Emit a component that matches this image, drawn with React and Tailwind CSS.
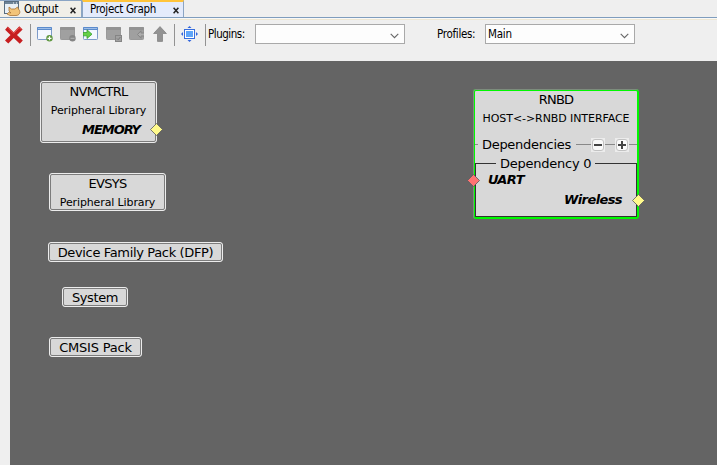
import React from 'react';

const ui = "font-['DejaVu_Sans_Condensed','DejaVu_Sans',sans-serif] [font-stretch:condensed]";
const graph = "font-['DejaVu_Sans',sans-serif] [font-stretch:normal]";

function WindowIcon({ disabled, children }) {
  return (
    <svg width="18" height="16" viewBox="0 0 18 16" className="shrink-0">
      <rect x="0.5" y="1.5" width="14" height="12" rx="0.8" fill={disabled ? '#a0a0a0' : '#f3f7ff'} stroke={disabled ? '#999' : '#7d9bc9'} />
      <rect x="0" y="1" width="15" height="3" rx="0.8" fill={disabled ? '#929292' : '#5b8bcc'} />
      {!disabled && <path d="M1 2.5h13" stroke="#9dbde8" />}
      {children}
    </svg>
  );
}

function Combo({ children }) {
  return (
    <div className="flex h-5 w-[150px] items-center justify-between border border-[#a9a9a9] bg-[#fdfdfd] pl-[2px] pr-[5px]">
      <span className="mt-[2px] text-[11.5px] leading-none tracking-[-0.2px]">{children}</span>
      <svg width="9" height="6" viewBox="0 0 9 6" className="mt-[3px]">
        <path d="M0.7 0.8 4.5 4.6 8.3 0.8" fill="none" stroke="#666" strokeWidth="1.1" />
      </svg>
    </div>
  );
}

function Close() {
  return (
    <svg width="6" height="7" viewBox="0 0 6 7" className="mt-[2px] shrink-0">
      <path d="M0.6 0.8 5.4 6.2M5.4 0.8 0.6 6.2" stroke="#222" strokeWidth="1.5" />
    </svg>
  );
}

function Node({ className, children }) {
  return (
    <div className={`absolute rounded-[3px] border border-[#ececec] bg-[#d8d8d8] ${className}`}>
      <div className="flex h-full flex-col items-center rounded-[2px] border border-[#7c7c7c] whitespace-nowrap">{children}</div>
    </div>
  );
}

function Pin({ color, className }) {
  return (
    <svg width="13" height="13" viewBox="0 0 13 13" className={`absolute ${className}`}>
      <path d="M6.5 0.5 12.5 6.5 6.5 12.5 0.5 6.5Z" fill={color} stroke="#5c5c5c" strokeWidth="0.8" />
    </svg>
  );
}

function Toggle({ plus }) {
  return (
    <svg width="14" height="14" viewBox="0 0 14 14" className="shrink-0">
      <rect width="14" height="14" fill="#ececec" />
      <rect x="1.5" y="1.5" width="11" height="11" rx="2.5" fill="#fafafa" stroke="#c2c2c2" />
      <path d={plus ? 'M3 7h8M7 3v8' : 'M3 7h8'} stroke="#444" strokeWidth="2" />
    </svg>
  );
}

export default function App() {
  return (
    <div className={`flex h-[465px] w-[717px] flex-col overflow-hidden bg-[#efefef] text-black ${ui}`}>
      <div className="flex h-[18px] shrink-0 border-b border-[#7f9dbd]">
        <div className="flex w-[82px] items-center border-r border-t border-[#8ba5c4] bg-[#f1efe8] pl-[4px]">
          <svg width="17" height="16" viewBox="0 0 17 16" className="shrink-0">
            <rect x="0.5" y="0.5" width="14" height="12" fill="#e9f0f6" stroke="#596d80" />
            <path d="M1 2h13" stroke="#6e8498" strokeWidth="2" />
            <path d="M9 2h1M12 2h1" stroke="#fff" />
            <path d="M5 6 7.5 8H11L13.5 6 14.8 8.5C17 11 15.5 14.5 12 14.5H6L3 13 4.5 11.5 7 12 5 10Z" fill="#f2c479" stroke="#a97335" strokeWidth="0.8" />
          </svg>
          <span className="ml-[3px] mt-px w-[46px] text-[11.5px] leading-none tracking-[-0.3px]">Output</span>
          <Close />
        </div>
        <div className="flex w-[102px] items-center border-x border-t-2 border-[#8ba5c4] border-t-[#ffc43b] bg-[#e4ebfb] pl-[7px]">
          <span className="w-[83px] text-[11.5px] leading-none tracking-[-0.34px]">Project Graph</span>
          <Close />
        </div>
      </div>
      <div className="h-[2px] shrink-0 border-b border-[#eee7d2] bg-[#f8f8f8]" />

      <div className="flex h-[41px] shrink-0 items-start pl-[4px] pt-1">
        <svg width="20" height="20" viewBox="0 0 20 20" className="mt-[1px]">
          <path d="M3.8 1.5 9.7 7.2 15.3 1.3 18.6 4.5 13 10.1 18.8 15.6 15.8 18.7 9.7 13 4.3 18.6 1 15.5 6.5 10 1.1 4.8Z" fill="#c71e20" />
          <path d="M4 2.5 9.7 8.3 15.3 2.6 17 4.4" fill="none" stroke="#e65a56" />
        </svg>
        <div className="ml-[6px] h-[22px] w-px bg-[#929292]" />
        <div className="ml-[6px] mt-[2px] flex gap-[5px]">
          <WindowIcon>
            <circle cx="12.5" cy="12.3" r="3.2" fill="#5d963e" />
            <path d="M10.5 12.3h4M12.5 10.3v4" stroke="#fff" strokeWidth="1.2" />
          </WindowIcon>
          <WindowIcon disabled>
            <circle cx="12.5" cy="12.3" r="3.2" fill="#858585" />
            <path d="M10.5 12.3h4" stroke="#b5b5b5" />
          </WindowIcon>
          <WindowIcon>
            <path d="M0 6.5h4V3.8L9 8.2 4 12.5V9.8H0Z" fill="#65cf46" stroke="#369f31" strokeWidth="0.8" />
          </WindowIcon>
          <WindowIcon disabled>
            <rect x="9.5" y="9.5" width="6" height="6" fill="#a1a1a1" stroke="#858585" />
            <path d="m11 12.5 1.2 1.2 2.2-2.7" fill="none" stroke="#777" />
          </WindowIcon>
          <WindowIcon disabled>
            <path d="M15 7h-3V4.8L8.5 8.5 12 12.2V10h3" fill="#acacac" stroke="#858585" />
          </WindowIcon>
        </div>
        <svg width="14" height="16" viewBox="0 0 14 16" className="ml-[6px] mt-[2px]">
          <path d="M7 0.6 13.4 7.5H9.5V15.4H4.5V7.5H0.6Z" fill="#929292" stroke="#858585" strokeWidth="0.8" />
        </svg>
        <div className="ml-[7px] h-[22px] w-px bg-[#929292]" />
        <svg width="17" height="16" viewBox="0 0 17 16" className="ml-[6px] mt-[2px]">
          <rect x="3.5" y="3.5" width="10" height="9" fill="#fff" stroke="#376ddd" />
          <rect x="5" y="5" width="7" height="6" fill="#5fa5f8" />
          <path d="m6.5 2 2-2 2 2M6.5 14l2 2 2-2M2 6 0 8l2 2M15 6l2 2-2 2" fill="#2f64dc" />
        </svg>
        <div className="ml-[7px] h-[22px] w-px bg-[#929292]" />
        <span className="ml-[2px] mt-[4px] w-[47px] text-[11.5px] leading-[13px] tracking-[-0.48px]">Plugins:</span>
        <Combo />
        <span className="ml-[32px] mt-[4px] w-[48px] text-[11.5px] leading-[13px] tracking-[-0.3px]">Profiles:</span>
        <Combo>Main</Combo>
      </div>

      <div className={`relative ml-[10px] flex-1 bg-[#646464] ${graph}`}>
        <Node className="left-[30px] top-[20px] h-[62px] w-[117px]">
          <div className="text-[13px] leading-[17px] tracking-[-0.75px]">NVMCTRL</div>
          <div className="mt-[3px] text-[11px] leading-[16px] tracking-[-0.12px]">Peripheral Library</div>
          <div className="mt-[3px] mr-[15px] self-end text-[13px] font-bold italic leading-[16px] tracking-[-1px]">MEMORY</div>
          <Pin color="#fffa8c" className="-right-[7px] top-[41px]" />
        </Node>
        <Node className="left-[39px] top-[112px] h-[38px] w-[117px]">
          <div className="mt-px text-[13px] leading-[16px] tracking-[-0.7px]">EVSYS</div>
          <div className="mt-[3px] text-[11px] leading-[16px] tracking-[-0.12px]">Peripheral Library</div>
        </Node>
        <Node className="left-[38px] top-[181px] h-[20px] w-[175px]">
          <div className="text-[13px] leading-[17px] tracking-[-0.35px]">Device Family Pack (DFP)</div>
        </Node>
        <Node className="left-[52px] top-[226px] h-[20px] w-[66px]">
          <div className="text-[13px] leading-[17px] tracking-[-0.4px]">System</div>
        </Node>
        <Node className="left-[39px] top-[276px] h-[20px] w-[93px]">
          <div className="text-[13px] leading-[17px] tracking-[-0.2px]">CMSIS Pack</div>
        </Node>

        <div className="absolute left-[463px] top-[28px] flex h-[130px] w-[166px] flex-col rounded-[3px] border-2 border-[#00f800] bg-[#d8d8d8] whitespace-nowrap">
          <div className="pointer-events-none absolute -inset-[2px] rounded-[3px] border-l border-t border-[#7d8d7d]" />
          <div className="text-center text-[13px] leading-[17px] tracking-[-0.8px]">RNBD</div>
          <div className="mt-[3px] text-center text-[11px] leading-[16px] tracking-[-0.08px]">HOST&lt;-&gt;RNBD INTERFACE</div>
          <div className="mt-[9px] flex h-[17px] items-center">
            <div className="h-px w-[3px] bg-[#888]" />
            <span className="ml-[4px] w-[94px] text-[13px] leading-none tracking-[-0.3px]">Dependencies</span>
            <div className="h-px w-[15px] bg-[#888]" />
            <Toggle />
            <div className="h-px w-[10px] bg-[#888]" />
            <Toggle plus />
            <div className="h-px flex-1 bg-[#888]" />
          </div>
          <div className="relative mt-[10px] h-[54px] border border-[#333]">
            <div className="-mt-[9px] ml-[20px] w-[99px] bg-[#d8d8d8] px-[4px] text-[13px] leading-[17px] tracking-[-0.25px]">Dependency 0</div>
            <div className="-mt-px ml-[12px] text-[13px] font-bold italic leading-[18px] tracking-[-0.6px]">UART</div>
            <div className="mr-[14px] mt-[2px] text-right text-[13px] font-bold italic leading-[18px] tracking-[-0.6px]">Wireless</div>
            <Pin color="#ff7373" className="-left-[9px] top-[10px]" />
            <Pin color="#fffa8c" className="-right-[9px] top-[30px]" />
          </div>
        </div>
      </div>
    </div>
  );
}
